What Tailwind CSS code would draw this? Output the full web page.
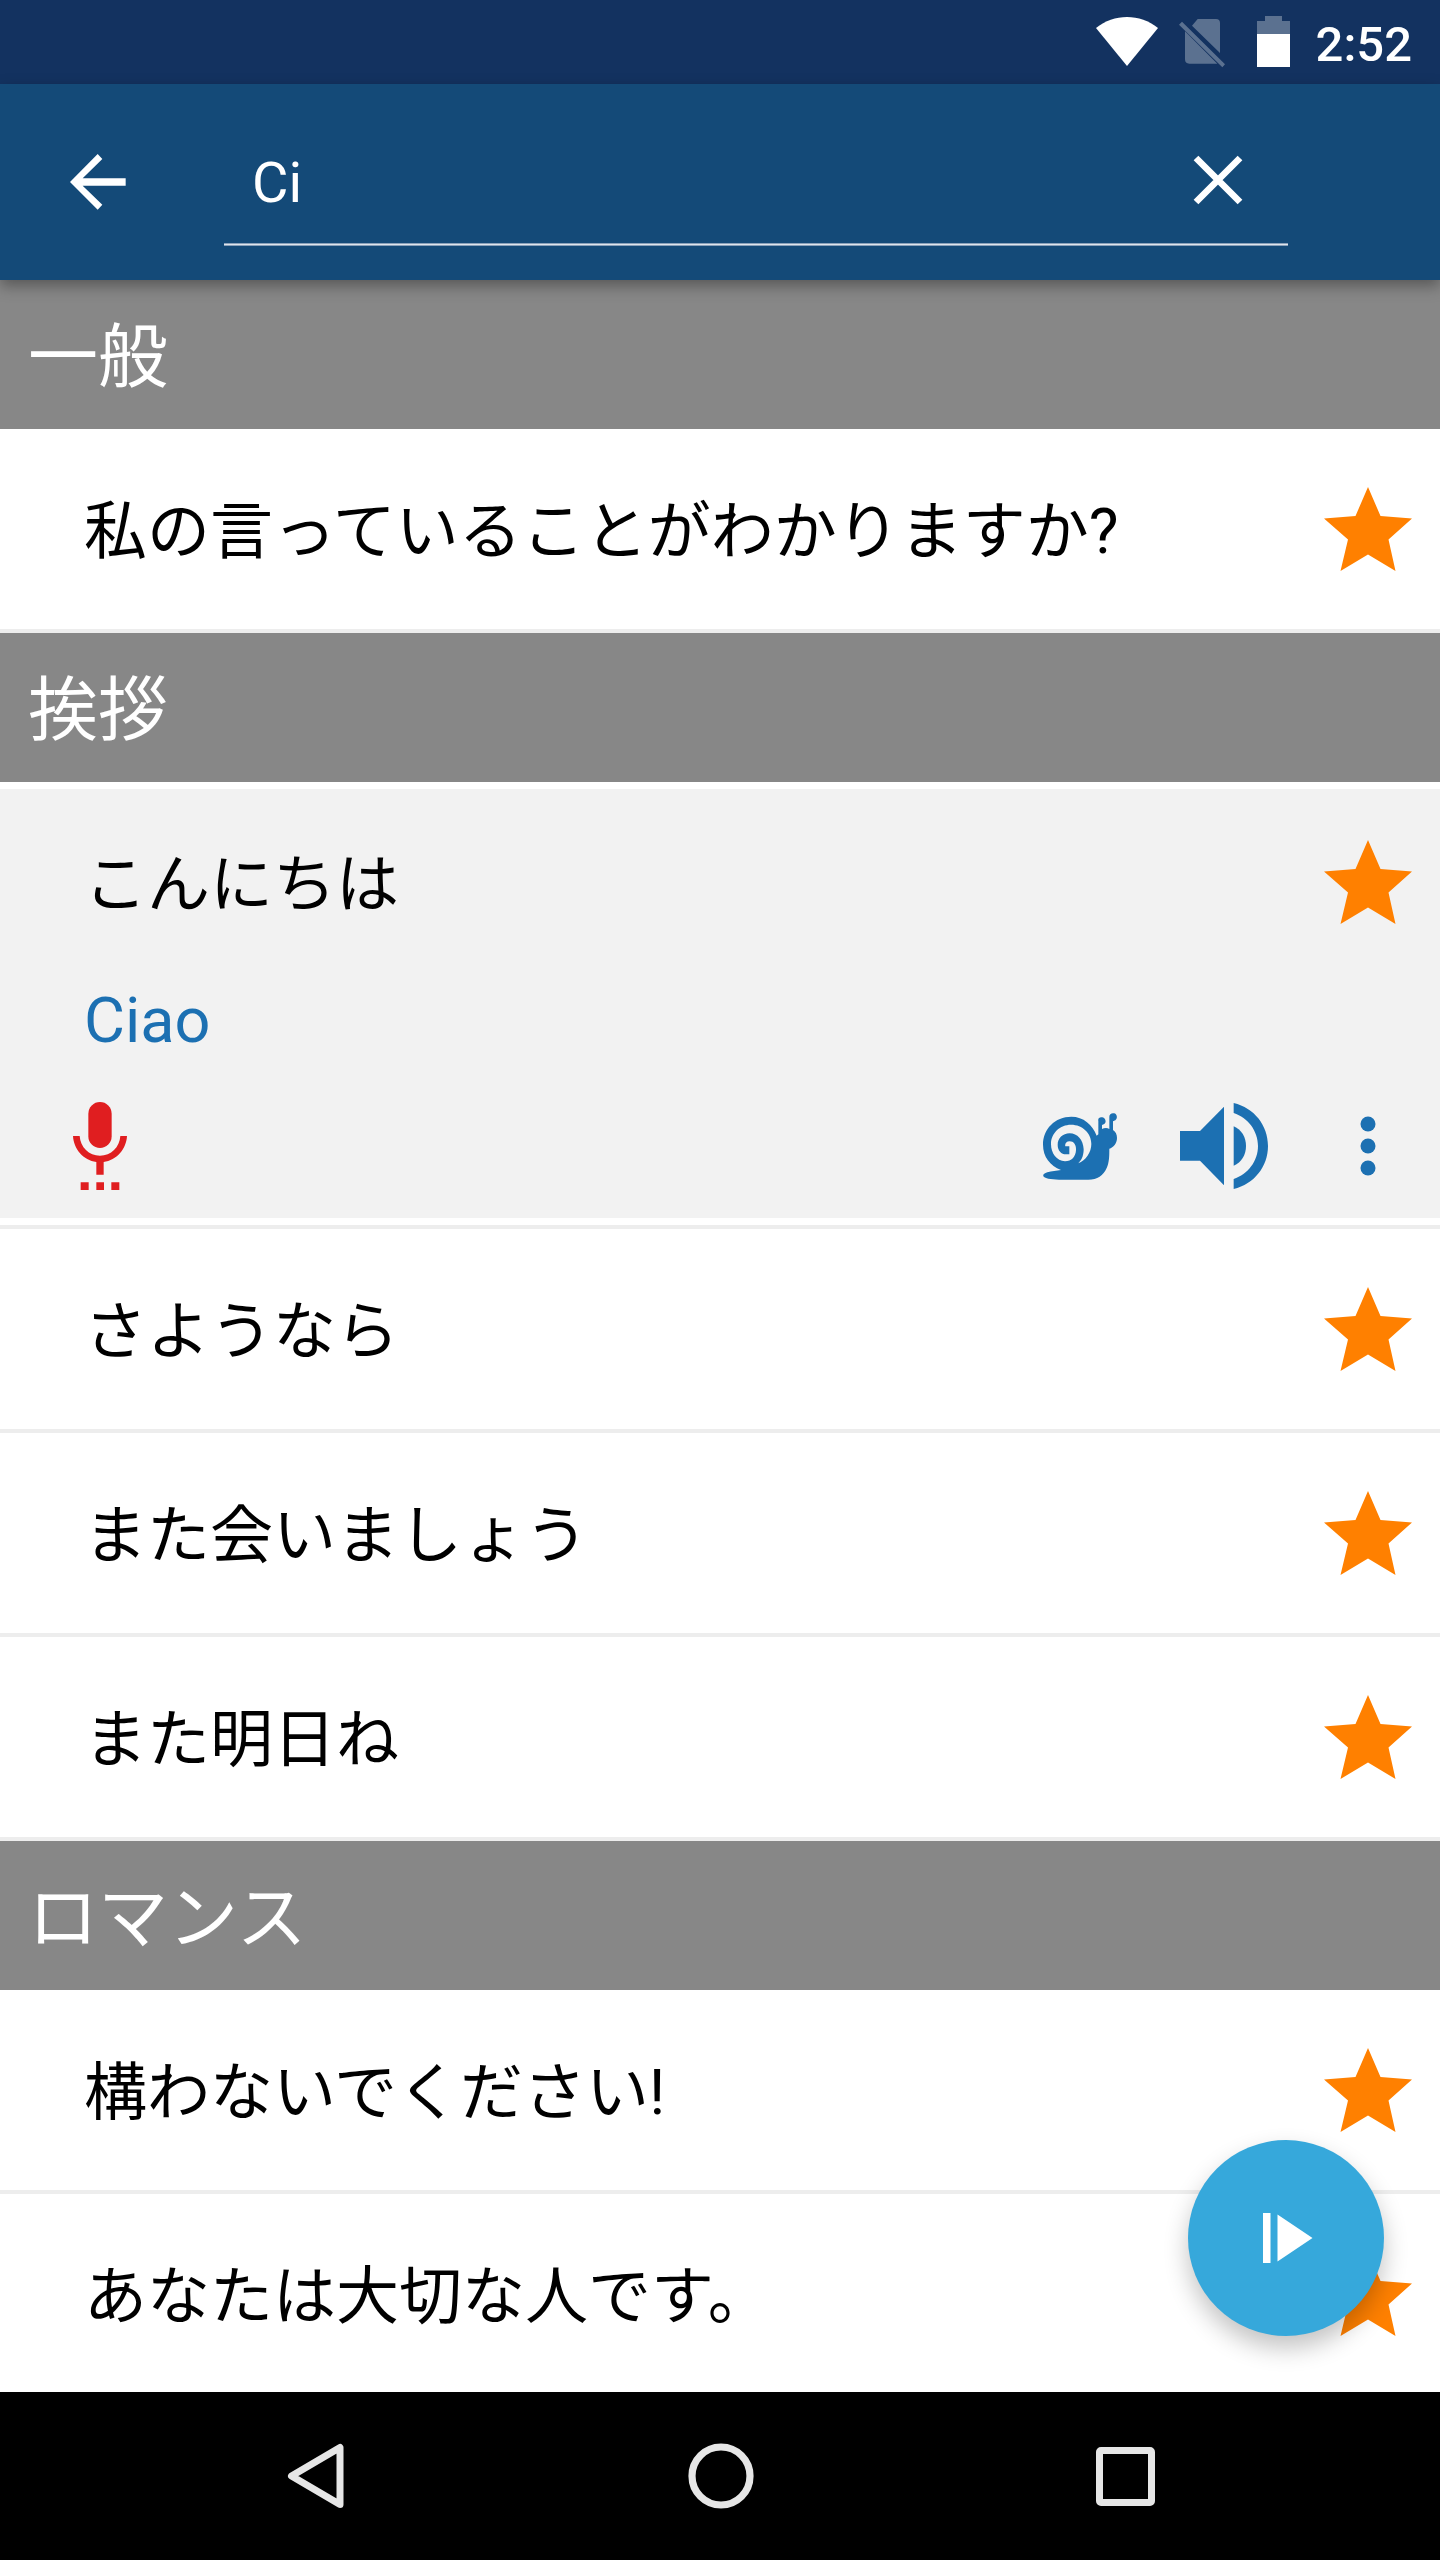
<!DOCTYPE html>
<html lang="ja">
  <head>
    <meta charset="UTF-8" />
    <meta name="viewport" content="width=device-width, initial-scale=1.0" />
    <title>Phrasebook</title>
    <script src="https://cdn.jsdelivr.net/npm/@tailwindcss/browser@4"></script>
  </head>
  <body class="bg-white font-[Roboto,'Noto_Sans_CJK_JP',sans-serif]">
    <svg class="hidden">
      <symbol id="star" viewBox="0 0 88 84">
        <path fill="#ff8000" d="M44 0 56.5 29 88 31.5 64.5 52.5 71.5 84 44 67.5 16.5 84 24 52.5 0 31.5 31.5 29z" />
      </symbol>
    </svg>

    <div class="relative flex h-[2560px] w-[1440px] flex-col overflow-hidden">
      <!-- status bar -->
      <div class="flex h-[84px] shrink-0 items-start justify-end bg-[#133260] pr-[28px] text-white">
        <svg class="mt-[17px] h-[49px] w-[62px]" viewBox="108 51 186 147" fill="#fff">
          <path d="M201 198 108 84C135 62 168 51 201 51s66 11 93 33z" />
        </svg>
        <svg class="mt-[19px] ml-[21px] h-[49px] w-[46px]" viewBox="357 57 138 147" fill="#5b7190">
          <path d="M396 77 413 57h55q12 0 12 12v90zM375 94l97 97h-84q-13 0-13-13zM357 74l9-9 129 128-8 9z" />
        </svg>
        <svg class="mt-4 ml-8 h-[51px] w-[33px]" viewBox="591 48 99 153">
          <path fill="#5b7190" d="M591 63h24V48h51v15h24v40h-99z" />
          <path fill="#fff" d="M591 102h99v99h-99z" />
        </svg>
        <span class="mt-4 ml-[26px] text-[49px] leading-[58px] font-medium">2:52</span>
      </div>

      <!-- search toolbar -->
      <header class="relative z-10 flex h-[196px] shrink-0 items-start bg-[#144a78] text-white shadow-[0_6px_14px_rgba(0,0,0,0.35)]">
        <svg class="mt-[70px] ml-[70px] h-14 w-14" viewBox="211 282 168 168" fill="#fff">
          <path d="M378 355v22H249l59 57-14 15-83-83 83-84 14 15-59 58z" />
        </svg>
        <div class="ml-[98px] flex h-[162px] w-[1064px] flex-col">
          <div class="flex h-[159px] items-start justify-between pr-[45px] pl-[28px]">
            <span class="mt-[66px] text-[56px] leading-[66px]">Ci</span>
            <svg class="mt-[71px] h-[50px] w-[50px]" viewBox="399 465 150 150" stroke="#fff" stroke-width="20">
              <path d="M408 474 540 606M540 474 408 606" />
            </svg>
          </div>
          <div class="h-[3px] border-y border-[#8ba1ba] bg-[#dfe5ec]"></div>
        </div>
      </header>

      <main class="h-[2112px] shrink-0 overflow-hidden text-[63px] leading-[94px] text-black">
        <h2 class="flex h-[149px] items-center bg-[#878787] px-7 pt-[6px] text-[70px] text-white">一般</h2>
        <div class="flex h-[204px] items-center justify-between border-b-4 border-[#ededed] pr-7 pl-[84px]">
          <span class="pt-[6px]">私の言っていることがわかりますか?</span>
          <svg class="h-[84px] w-[88px]"><use href="#star" /></svg>
        </div>

        <h2 class="flex h-[149px] items-center bg-[#878787] px-7 pt-[6px] text-[70px] text-white">挨拶</h2>
        <div class="border-b-4 border-[#ededed] py-[7px]">
          <div class="h-[429px] bg-[#f2f2f2]">
            <div class="flex h-[186px] items-center justify-between pr-7 pl-[84px]">
              <span class="pt-[6px]">こんにちは</span>
              <svg class="h-[84px] w-[88px]"><use href="#star" /></svg>
            </div>
            <p class="h-[127px] pt-[2px] pl-[84px] leading-[88px] text-[#1c70b2]">Ciao</p>
            <div class="flex h-[88px] items-center pr-[64px] pl-[73px]">
              <svg class="h-[88px] w-[54px]" viewBox="219 426 162 264" fill="#e01e20">
                <rect x="265" y="426" width="70" height="138" rx="35" />
                <path d="M219 528h20c2 34 28 59 61 59s59-25 61-59h20c-2 39-31 73-70 78v38h-22v-38c-39-5-68-39-70-78z" />
                <path d="M242 667h24v23h-24zM289 667h23v23h-23zM334 667h24v23h-24z" />
              </svg>
              <svg class="ml-auto h-[67px] w-[74px]" viewBox="69 97 222 201" fill="#1c70b2" fill-rule="evenodd">
                <path
                  d="M69 192C69 145 105 108 154 108C190 108 218 132 230 165L235 161V121C233 112 240 108 247 110C257 112 260 125 253 130L246 133V145C252 142 262 141 268 145V108C268 100 275 96 283 98C292 101 293 114 286 119L279 122V148C287 153 291 162 291 172C291 188 280 201 268 204C268 225 268 245 260 262C250 285 232 297 205 297C160 298 110 298 85 294C65 290 65 280 82 275C95 271 110 270 123 268C90 255 69 228 69 192Z
                  M93 190C93 218 110 240 135 242C155 242 167 228 168 208C169 194 162 182 149 182C138 182 134 190 136 197H148V221H138C124 221 113 210 113 192C113 173 128 158 149 158C172 158 190 178 191 206C191 220 188 235 175 248C197 240 214 215 214 190C214 158 188 132 153 132C120 132 93 157 93 190Z"
                />
              </svg>
              <svg class="ml-[63px] h-[86px] w-[88px]" viewBox="480 69 264 258" fill="#1c70b2">
                <path d="M480 153h60l72-73v236l-72-74h-60z" />
                <path d="M641 139c24 10 37 33 37 59s-13 49-37 59z" />
                <path d="M641 69c62 15 103 67 103 129s-41 114-103 129v-30c43-14 73-54 73-99s-30-85-73-99z" />
              </svg>
              <svg class="ml-[92px] h-[60px] w-4" viewBox="0 0 16 60" fill="#1c70b2">
                <circle cx="8" cy="8" r="7.5" />
                <circle cx="8" cy="30" r="7.5" />
                <circle cx="8" cy="52" r="7.5" />
              </svg>
            </div>
          </div>
        </div>
        <div class="flex h-[204px] items-center justify-between border-b-4 border-[#ededed] pr-7 pl-[84px]">
          <span class="pt-[6px]">さようなら</span>
          <svg class="h-[84px] w-[88px]"><use href="#star" /></svg>
        </div>
        <div class="flex h-[204px] items-center justify-between border-b-4 border-[#ededed] pr-7 pl-[84px]">
          <span class="pt-[6px]">また会いましょう</span>
          <svg class="h-[84px] w-[88px]"><use href="#star" /></svg>
        </div>
        <div class="flex h-[204px] items-center justify-between border-b-4 border-[#ededed] pr-7 pl-[84px]">
          <span class="pt-[6px]">また明日ね</span>
          <svg class="h-[84px] w-[88px]"><use href="#star" /></svg>
        </div>

        <h2 class="flex h-[149px] items-center bg-[#878787] px-7 pt-[6px] text-[70px] text-white">ロマンス</h2>
        <div class="flex h-[204px] items-center justify-between border-b-4 border-[#ededed] pr-7 pl-[84px]">
          <span class="pt-[6px]">構わないでください!</span>
          <svg class="h-[84px] w-[88px]"><use href="#star" /></svg>
        </div>
        <div class="flex h-[204px] items-center justify-between border-b-4 border-[#ededed] pr-7 pl-[84px]">
          <span class="pt-[6px]">あなたは大切な人です。</span>
          <svg class="h-[84px] w-[88px]"><use href="#star" /></svg>
        </div>
      </main>

      <!-- floating play button -->
      <button class="absolute right-14 bottom-[224px] flex h-[196px] w-[196px] items-center justify-center rounded-full bg-[#36a8db] shadow-[0_12px_24px_rgba(0,0,0,0.24)]">
        <svg class="ml-[3px] h-[50px] w-[50px]" viewBox="0 0 50 50" fill="#fff">
          <path d="M0 0h7.5v50H0zM14.500 1.500 49.500 25l-35 23.500z" />
        </svg>
      </button>

      <!-- system navigation -->
      <nav class="relative z-10 flex h-[168px] shrink-0 items-center bg-black">
        <svg class="ml-[287px] h-[66px] w-[58px]" viewBox="0 0 58 66" fill="none" stroke="#e6e6e6" stroke-width="7" stroke-linejoin="round">
          <path d="M53 4.500v57L4.500 33z" />
        </svg>
        <svg class="ml-[343px] h-[66px] w-[66px]" viewBox="0 0 66 66" fill="none" stroke="#e6e6e6" stroke-width="7.200">
          <circle cx="33" cy="33" r="29" />
        </svg>
        <div class="ml-[342px] h-[59px] w-[59px] rounded-[5px] border-[7px] border-[#e6e6e6]"></div>
      </nav>
    </div>
  </body>
</html>
